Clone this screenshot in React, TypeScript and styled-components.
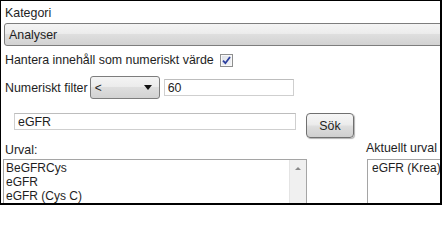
import React from 'react';
import styled, { createGlobalStyle } from 'styled-components';

const GlobalStyle = createGlobalStyle`
  html, body {
    margin: 0;
    padding: 0;
    background: #ffffff;
  }
  * {
    box-sizing: border-box;
  }
`;

const urvalItems = ['BeGFRCys', 'eGFR', 'eGFR (Cys C)'];
const currentItems = ['eGFR (Krea)'];

export default function App() {
  return (
    <>
      <GlobalStyle />
      <Frame>
        <Label>Kategori</Label>
        <CategorySelect>
          <span>Analyser</span>
        </CategorySelect>

        <CheckRow>
          <Label>Hantera innehåll som numeriskt värde</Label>
          <CheckBox>
            <svg width="9" height="9" viewBox="0 0 9 9">
              <path d="M1 4.6 L3.4 7.2 L8 1" fill="none" stroke="#2c3f9e" strokeWidth="1.8" />
            </svg>
          </CheckBox>
        </CheckRow>

        <FilterRow>
          <Label>Numeriskt filter</Label>
          <SmallSelect>
            <span>&lt;</span>
            <Arrow />
          </SmallSelect>
          <TextInput width={130} defaultValue="60" />
        </FilterRow>

        <SearchRow>
          <TextInput width={282} defaultValue="eGFR" />
          <Button>Sök</Button>
        </SearchRow>

        <ListsRow>
          <Column offset={5}>
            <Label>Urval:</Label>
            <ListBox width={304} inset={2} gapTop={2}>
              {urvalItems.map((item) => (
                <Item key={item}>{item}</Item>
              ))}
              <ScrollTrack>
                <UpArrow />
              </ScrollTrack>
            </ListBox>
          </Column>
          <Column offset={3}>
            <Label>Aktuellt urval</Label>
            <ListBox width={120} inset={4} gapTop={4}>
              {currentItems.map((item) => (
                <Item key={item}>{item}</Item>
              ))}
            </ListBox>
          </Column>
        </ListsRow>
      </Frame>
    </>
  );
}

const Frame = styled.div`
  width: 442px;
  height: 205px;
  overflow: hidden;
  border-style: solid;
  border-color: #000;
  border-width: 1px 2px 2px 1px;
  padding: 5px 0 0 4px;
  font-family: 'Liberation Sans', Arial, sans-serif;
  font-size: 12px;
  line-height: 14px;
  color: #1e1e1e;
  display: flex;
  flex-direction: column;
  align-items: flex-start;
`;

const Label = styled.div`
  font-size: 12.4px;
  white-space: nowrap;
`;

const selectGradient = `linear-gradient(#f4f4f4 0%, #ececec 45%, #dedede 50%, #d2d2d2 100%)`;

const CategorySelect = styled.div`
  margin-top: 3px;
  margin-left: -1px;
  width: 470px;
  height: 23px;
  flex-shrink: 0;
  border: 1px solid #7d7d7d;
  border-radius: 3px;
  background: ${selectGradient};
  display: flex;
  align-items: center;
  padding-left: 4px;
  font-size: 12.4px;
`;

const CheckRow = styled.div`
  margin-top: 6px;
  display: flex;
  align-items: center;
  gap: 6px;
`;

const CheckBox = styled.div`
  width: 13px;
  height: 13px;
  margin-top: 2px;
  border: 1px solid #8e8f8f;
  background: linear-gradient(135deg, #dcdfe6, #f4f5f8);
  box-shadow: inset 0 0 0 1px #f8f8f8;
  display: flex;
  align-items: center;
  justify-content: center;
`;

const FilterRow = styled.div`
  margin-top: 9px;
  display: flex;
  align-items: center;
`;

const SmallSelect = styled.div`
  margin-left: 2px;
  width: 70px;
  height: 23px;
  border: 1px solid #7d7d7d;
  border-radius: 3px;
  background: ${selectGradient};
  display: flex;
  align-items: center;
  justify-content: space-between;
  padding: 0 7px 0 4px;
`;

const Arrow = styled.div`
  width: 0;
  height: 0;
  border-left: 4px solid transparent;
  border-right: 4px solid transparent;
  border-top: 5px solid #111;
`;

const TextInput = styled.input<{ width: number }>`
  width: ${(p) => p.width}px;
  height: 17px;
  margin-left: 4px;
  padding: 0 3px;
  border: 1px solid #cfcfcf;
  border-top-color: #bdbdbd;
  background: #fff;
  font-family: inherit;
  font-size: 12.4px;
  color: #1e1e1e;
  outline: none;
`;

const SearchRow = styled.div`
  margin-top: 14px;
  margin-left: 5px;
  display: flex;
  align-items: flex-start;
  gap: 10px;
`;

const Button = styled.div`
  width: 48px;
  height: 25px;
  border: 1px solid #707070;
  border-radius: 4px;
  background: linear-gradient(#f6f6f6 0%, #ececec 45%, #dddddd 55%, #cfcfcf 100%);
  box-shadow: 1px 1px 1px rgba(0, 0, 0, 0.3);
  display: flex;
  align-items: center;
  justify-content: center;
  font-size: 12.4px;
`;

const ListsRow = styled.div`
  margin-left: -2px;
  display: flex;
  gap: 60px;
`;

const Column = styled.div<{ offset: number }>`
  display: flex;
  flex-direction: column;
  align-items: flex-start;
  margin-top: ${(p) => p.offset}px;

  & > ${Label} {
    margin-left: ${(p) => (p.offset === 5 ? 2 : -1)}px;
  }
`;

const ListBox = styled.div<{ width: number; inset: number; gapTop: number }>`
  position: relative;
  margin-top: ${(p) => p.gapTop}px;
  width: ${(p) => p.width}px;
  height: 60px;
  border: 1px solid #a5a5a5;
  padding: 1px 0 0 ${(p) => p.inset}px;
  font-size: 12px;
  overflow: hidden;
`;

const Item = styled.div`
  line-height: 14px;
  white-space: nowrap;
`;

const ScrollTrack = styled.div`
  position: absolute;
  top: 0;
  right: 0;
  bottom: 0;
  width: 17px;
  background: #f0f0f0;
  border-left: 1px solid #e4e4e4;
  display: flex;
  justify-content: center;
  padding-top: 7px;
`;

const UpArrow = styled.div`
  width: 0;
  height: 0;
  border-left: 3px solid transparent;
  border-right: 3px solid transparent;
  border-bottom: 3px solid #8a8a8a;
`;
